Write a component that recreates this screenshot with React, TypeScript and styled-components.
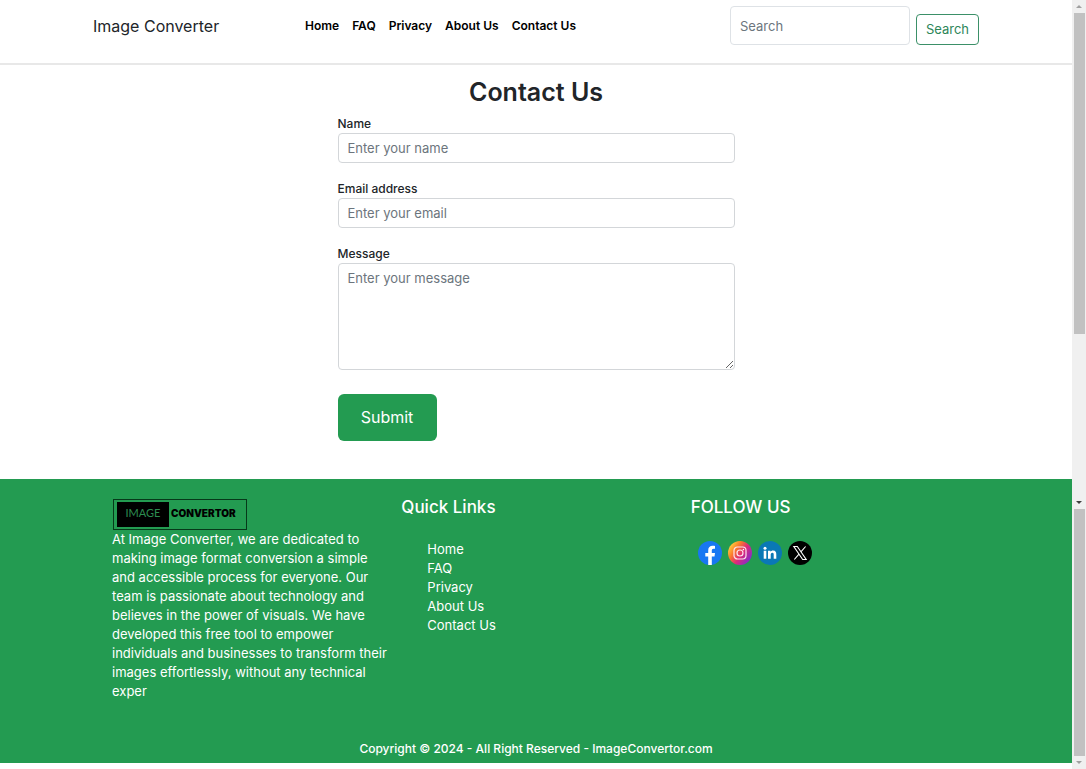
import React from "react";
import styled, { createGlobalStyle } from "styled-components";

const green = "#239b51";

const GlobalStyle = createGlobalStyle`
  *, *::before, *::after { box-sizing: border-box; }
  body {
    margin: 0;
    background: #fff;
    color: #212529;
    font-family: Inter, "Liberation Sans", sans-serif;
    font-size: 13px;
    line-height: 19px;
  }
  input, textarea, button { font: inherit; }
`;

const Page = styled.div`
  display: flex;
  min-height: 100vh;
`;

const Content = styled.div`
  flex: 1;
  min-width: 0;
`;

const Header = styled.header`
  border-bottom: 2px solid #e8e8e8;
`;

const HeaderInner = styled.div`
  display: flex;
  align-items: flex-start;
  max-width: 886px;
  min-height: 63px;
  margin: 0 auto;
  padding-top: 6px;
`;

const Brand = styled.a`
  width: 212px;
  padding-top: 8px;
  color: #212529;
  font-size: 16px;
  line-height: 24px;
  text-decoration: none;
`;

const Nav = styled.nav`
  display: flex;
  gap: 13px;
  padding-top: 10px;
`;

const NavLink = styled.a`
  color: #000;
  font-size: 12px;
  font-weight: 600;
  text-decoration: none;
`;

const SearchForm = styled.form`
  display: flex;
  align-items: flex-end;
  gap: 6px;
  margin-left: auto;
`;

const Field = styled.input<{ $tall?: boolean }>`
  display: block;
  width: ${(p) => (p.$tall ? "180px" : "100%")};
  height: ${(p) => (p.$tall ? "39px" : "30px")};
  padding: 0 9px;
  border: 1px solid ${(p) => (p.$tall ? "#dee2e6" : "#d3d6d9")};
  border-radius: 4px;
  background: #fff;
  &::placeholder { color: #6c757d; opacity: 1; }
`;

const MessageField = styled.textarea`
  display: block;
  width: 100%;
  height: 107px;
  padding: 5px 9px;
  border: 1px solid #d3d6d9;
  border-radius: 4px;
  resize: vertical;
  &::placeholder { color: #6c757d; opacity: 1; }
`;

const SearchButton = styled.button`
  width: 63px;
  height: 31px;
  padding: 0;
  border: 1px solid #3b9068;
  border-radius: 4px;
  background: #fff;
  color: #2d8659;
`;

const Main = styled.main`
  max-width: 397px;
  margin: 0 auto;
  padding: 12px 0 38px;
`;

const Title = styled.h1`
  margin: 0 0 6px;
  font-size: 25px;
  font-weight: 600;
  line-height: 31px;
  text-align: center;
`;

const Group = styled.div`
  margin-bottom: 16px;
`;

const Label = styled.label`
  display: block;
  font-size: 12px;
  font-weight: 500;
`;

const SubmitButton = styled.button`
  display: block;
  width: 99px;
  height: 47px;
  margin-top: 24px;
  border: 0;
  border-radius: 6px;
  background: ${green};
  color: #fff;
  font-size: 16px;
`;

const Footer = styled.footer`
  padding-top: 16px;
  background: ${green};
  color: #fff;
`;

const Columns = styled.div`
  display: grid;
  grid-template-columns: repeat(3, 1fr);
  max-width: 868px;
  min-height: 244px;
  margin: 0 auto;
`;

const Column = styled.section`
  min-width: 0;
  padding: 0 10px;
`;

const Logo = styled.div`
  display: flex;
  align-items: center;
  width: 134px;
  height: 31px;
  margin: 4px 0 0 1px;
  padding: 3px;
  border: 1px solid #06391a;
  color: #000;
  line-height: 22px;
`;

const LogoDark = styled.span`
  width: 52px;
  height: 25px;
  margin-right: 2px;
  background: #000;
  color: #2c8c50;
  font-family: Lato, sans-serif;
  font-size: 11px;
  text-align: center;
`;

const LogoLight = styled.span`
  height: 25px;
  font-size: 10px;
  font-weight: 900;
`;

const About = styled.p`
  margin: 0;
`;

const Line = styled.span`
  display: block;
  white-space: nowrap;
`;

const FooterHeading = styled.h2`
  margin: 0;
  font-size: 17px;
  font-weight: 500;
  line-height: 24px;
`;

const LinkList = styled.ul`
  margin: 21px 0 0;
  padding: 0 0 0 26px;
  list-style: none;
`;

const FooterLink = styled.a`
  color: #fff;
  text-decoration: none;
`;

const Social = styled.div`
  display: flex;
  gap: 6px;
  margin-top: 22px;
  padding-left: 7px;
`;

const SocialLink = styled.a`
  width: 24px;
  height: 24px;
  svg { display: block; }
`;

const Copyright = styled.p`
  margin: 0;
  padding-bottom: 5px;
  font-size: 12px;
  font-weight: 500;
  text-align: center;
`;

const ScrollRail = styled.div`
  display: flex;
  flex-direction: column;
  flex: none;
  width: 14px;
  background: #f0f0f0;
`;

const ScrollPart = styled.div<{ $grow: number }>`
  display: flex;
  flex-direction: column;
  flex: ${(p) => p.$grow} 0 0;
`;

const Arrow = styled.span<{ $down?: boolean; $dark?: boolean }>`
  display: grid;
  place-items: center;
  height: 13px;
  &::before {
    content: "";
    border: 3px solid transparent;
    border-top-width: ${(p) => (p.$down ? "3px" : "0")};
    border-bottom-width: ${(p) => (p.$down ? "0" : "3px")};
    border-${(p) => (p.$down ? "top" : "bottom")}-color: ${(p) => (p.$dark ? "#404040" : "#a0a0a0")};
  }
`;

const Thumb = styled.div<{ $share: string }>`
  height: ${(p) => p.$share};
  margin: 0 1px 0 2px;
  background: #c1c1c1;
`;

const Spacer = styled.div`
  flex: 1;
`;

const links = ["Home", "FAQ", "Privacy", "About Us", "Contact Us"];

const aboutLines = [
  "At Image Converter, we are dedicated to",
  "making image format conversion a simple",
  "and accessible process for everyone. Our",
  "team is passionate about technology and",
  "believes in the power of visuals. We have",
  "developed this free tool to empower",
  "individuals and businesses to transform their",
  "images effortlessly, without any technical",
  "exper",
];

const Facebook = () => (
  <svg width="24" height="24" viewBox="0 0 24 24">
    <circle cx="12" cy="12" r="12" fill="#1877f2" />
    <path d="M10.2 24v-8.6H7.3v-3.5h2.9V9.3c0-3 1.8-4.6 4.4-4.6 1.3 0 2.4.2 2.4.2v2.9h-1.4c-1.4 0-1.8.9-1.8 1.8v2.3H17l-.5 3.5h-2.7V24z" fill="#fff" />
  </svg>
);

const Instagram = () => (
  <svg width="24" height="24" viewBox="0 0 24 24">
    <defs>
      <linearGradient id="insta" x1="0.05" y1="0.2" x2="0.9" y2="0.8">
        <stop offset="0" stopColor="#ffd23e" />
        <stop offset="0.3" stopColor="#fb7a2c" />
        <stop offset="0.6" stopColor="#dc2a79" />
        <stop offset="1" stopColor="#8a2bc8" />
      </linearGradient>
    </defs>
    <circle cx="12" cy="12" r="12" fill="url(#insta)" />
    <g fill="none" stroke="#ffe3ee" strokeWidth="1.2">
      <rect x="6" y="6" width="12" height="12" rx="3.4" />
      <circle cx="12" cy="12" r="3" />
    </g>
    <circle cx="15.4" cy="8.6" r="0.8" fill="#fff" />
  </svg>
);

const LinkedIn = () => (
  <svg width="24" height="24" viewBox="0 0 24 24">
    <circle cx="12" cy="12" r="12" fill="#0a78b5" />
    <circle cx="7" cy="7.3" r="1.5" fill="#fff" />
    <path d="M5.7 9.8h2.6v8H5.7zM10 9.8h2.5v1.1c.4-.7 1.3-1.3 2.6-1.3 2.6 0 3.2 1.7 3.2 3.9v4.3h-2.6v-3.9c0-1 0-2.1-1.3-2.1s-1.7 1-1.7 2.1v3.9H10z" fill="#fff" />
  </svg>
);

const XLogo = () => (
  <svg width="24" height="24" viewBox="0 0 24 24">
    <circle cx="12" cy="12" r="12" fill="#000" />
    <path d="M5.8 5.5h3.5L18.2 18.5h-3.5zM17.6 5.5l-4.9 5.6M11.2 12.9L6.3 18.5" fill="none" stroke="#fff" strokeWidth="1.1" />
  </svg>
);

const socials = [
  { name: "Facebook", Icon: Facebook },
  { name: "Instagram", Icon: Instagram },
  { name: "LinkedIn", Icon: LinkedIn },
  { name: "X", Icon: XLogo },
];

export default function App() {
  return (
    <Page>
      <GlobalStyle />
      <Content>
        <Header>
          <HeaderInner>
            <Brand href="#">Image Converter</Brand>
            <Nav>
              {links.map((l) => (
                <NavLink key={l} href="#">{l}</NavLink>
              ))}
            </Nav>
            <SearchForm>
              <Field $tall type="search" placeholder="Search" aria-label="Search" />
              <SearchButton type="submit">Search</SearchButton>
            </SearchForm>
          </HeaderInner>
        </Header>
        <Main>
          <Title>Contact Us</Title>
          <form>
            <Group>
              <Label htmlFor="name">Name</Label>
              <Field id="name" type="text" placeholder="Enter your name" />
            </Group>
            <Group>
              <Label htmlFor="email">Email address</Label>
              <Field id="email" type="email" placeholder="Enter your email" />
            </Group>
            <Group>
              <Label htmlFor="message">Message</Label>
              <MessageField id="message" placeholder="Enter your message" />
            </Group>
            <SubmitButton type="submit">Submit</SubmitButton>
          </form>
        </Main>
        <Footer>
          <Columns>
            <Column>
              <Logo>
                <LogoDark>IMAGE</LogoDark>
                <LogoLight>CONVERTOR</LogoLight>
              </Logo>
              <About>
                {aboutLines.map((l) => (
                  <Line key={l}>{l} </Line>
                ))}
              </About>
            </Column>
            <Column>
              <FooterHeading>Quick Links</FooterHeading>
              <LinkList>
                {links.map((l) => (
                  <li key={l}><FooterLink href="#">{l}</FooterLink></li>
                ))}
              </LinkList>
            </Column>
            <Column>
              <FooterHeading>FOLLOW US</FooterHeading>
              <Social>
                {socials.map(({ name, Icon }) => (
                  <SocialLink key={name} href="#" aria-label={name}><Icon /></SocialLink>
                ))}
              </Social>
            </Column>
          </Columns>
          <Copyright>Copyright © 2024 - All Right Reserved - ImageConvertor.com</Copyright>
        </Footer>
      </Content>
      <ScrollRail aria-hidden="true">
        <ScrollPart $grow={509}>
          <Arrow />
          <Thumb $share="63%" />
          <Spacer />
          <Arrow $down $dark />
        </ScrollPart>
        <ScrollPart $grow={260}>
          <Thumb $share="95%" />
          <Spacer />
          <Arrow $down />
        </ScrollPart>
      </ScrollRail>
    </Page>
  );
}
